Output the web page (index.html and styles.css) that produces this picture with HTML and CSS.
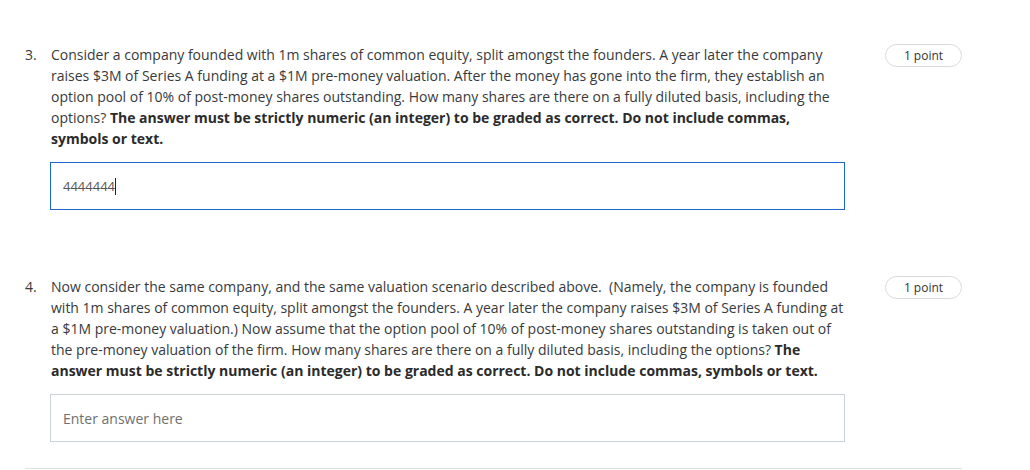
FILE: index.html
```html
<!DOCTYPE html>
<html>
<head>
<meta charset="utf-8">
<link rel="stylesheet" href="styles.css">
</head>
<body>
<div class="page">
  <div class="question q3">
    <div class="num">3.</div>
    <div class="content">
      <p class="prompt">Consider a company founded with 1m shares of common equity, split amongst the founders. A year later the company raises $3M of Series A funding at a $1M pre-money valuation. After the money has gone into the firm, they establish an option pool of 10% of post-money shares outstanding. How many shares are there on a fully diluted basis, including the options? <strong>The answer must be strictly numeric (an integer) to be graded as correct. Do not include commas, symbols or text.</strong></p>
      <div class="answer focused"><span class="value">4444444</span><span class="caret"></span></div>
    </div>
    <div class="badge">1 point</div>
  </div>
  <div class="question q4">
    <div class="num">4.</div>
    <div class="content">
      <p class="prompt">Now consider the same company, and the same valuation scenario described above.&nbsp; (Namely, the company is founded with 1m shares of common equity, split amongst the founders. A year later the company raises $3M of Series A funding at a $1M pre-money valuation.) Now assume that the option pool of 10% of post-money shares outstanding is taken out of the pre-money valuation of the firm. How many shares are there on a fully diluted basis, including the options? <strong>The answer must be strictly numeric (an integer) to be graded as correct. Do not include commas, symbols or text.</strong></p>
      <div class="answer"><span class="placeholder">Enter answer here</span></div>
    </div>
    <div class="badge">1 point</div>
  </div>
  <div class="divider"></div>
</div>
</body>
</html>
```

FILE: styles.css
```css
* { box-sizing: border-box; }
html, body { margin: 0; padding: 0; background: #fff; }
body {
  font-family: "Open Sans", "DejaVu Sans", sans-serif;
  font-size: 14px;
  line-height: 21px;
  color: #373a3c;
}
.page {
  padding: 44px 0 0 25px;
  width: 962px;
}
.question {
  display: flex;
  align-items: flex-start;
}
.q4 { margin-top: 66px; }
.num {
  width: 25px;
  flex: none;
}
.content {
  width: 795px;
  flex: none;
}
.prompt {
  margin: 0;
  padding-left: 1px;
}
.prompt strong { font-weight: 700; color: #2b2b2b; }
.answer {
  margin-top: 13px;
  height: 48px;
  border: 1px solid #ccd0db;
  display: flex;
  align-items: center;
  padding-left: 12px;
  font-size: 13px;
}
.answer.focused { border-color: #1c66d1; }
.value { color: #555; }
.caret {
  display: inline-block;
  width: 1px;
  height: 17px;
  background: #222;
}
.placeholder { color: #6f6f6f; font-size: 14px; }
.badge {
  margin-left: 40px;
  margin-top: 0;
  width: 77px;
  height: 23px;
  border: 1px solid #dadada;
  border-radius: 12px;
  font-size: 12px;
  line-height: 21px;
  text-align: center;
  color: #333;
  flex: none;
}
.divider {
  margin-top: 26px;
  height: 1px;
  background: #e1e1e1;
  width: 937px;
}
```
